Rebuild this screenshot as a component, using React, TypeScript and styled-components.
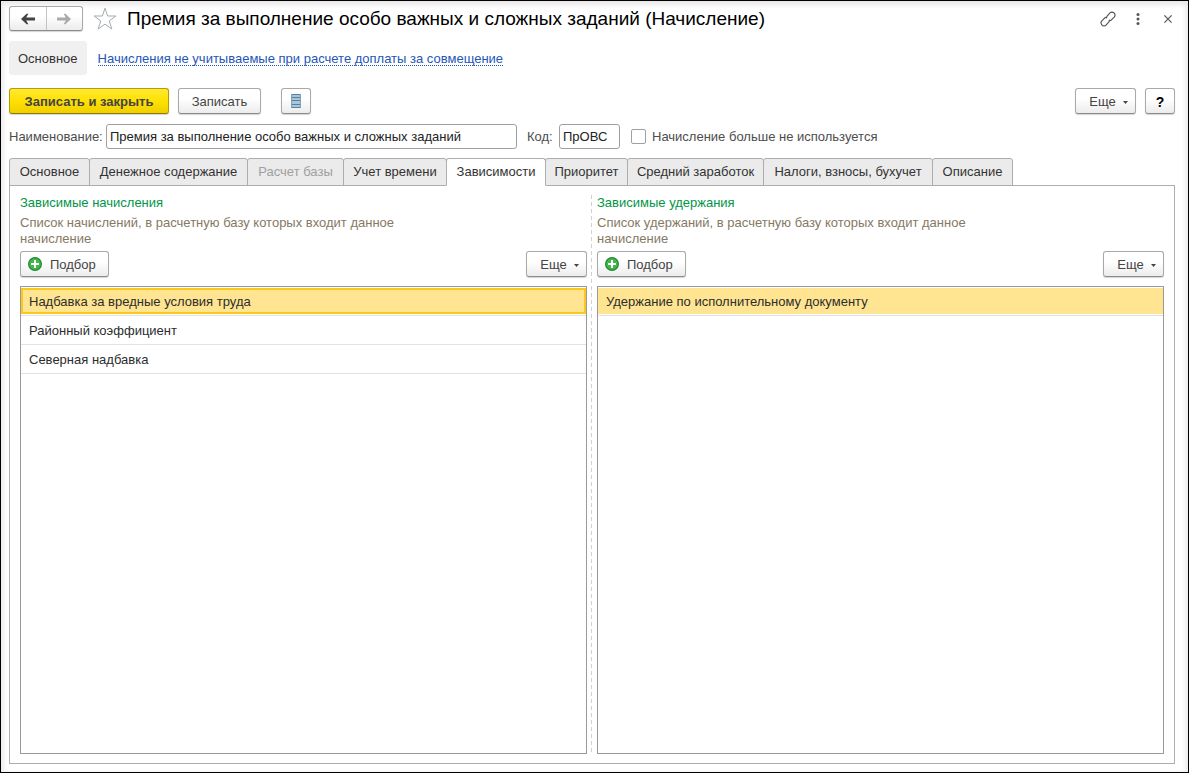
import React from "react";
import styled, { createGlobalStyle, css } from "styled-components";

const GlobalStyle = createGlobalStyle`
  *, *::before, *::after { box-sizing: border-box; }
  body {
    margin: 0;
    background: #fff;
    color: #333;
    font: 13px/16px "Liberation Sans", Arial, sans-serif;
  }
  button, input { font: inherit; color: inherit; }
  h1, h2, p, ul { margin: 0; padding: 0; }
`;

const Window = styled.main`
  display: flex;
  flex-direction: column;
  min-height: 100vh;
  padding: 5px 13px 8px 8px;
  border: 1px solid #000;
  box-shadow: inset 0 5px 4px -1px #ebe8ea, inset 4px 0 4px -1px #f0eef0, inset -4px 0 4px -1px #f0eef0;
`;

const TitleBar = styled.header`
  display: flex;
  align-items: center;
  height: 25px;
`;

const raised = css`
  border: 1px solid #a9a9a9;
  border-bottom-color: #8c8c8c;
  border-radius: 3px;
  background: linear-gradient(#fff 40%, #ececec);
  box-shadow: 0 1px 1px #d4d4d4;
`;

const HistoryButtons = styled.div`
  ${raised}
  display: flex;
  width: 74px;
  height: 25px;
`;

const HistoryButton = styled.button`
  display: flex;
  flex: 1;
  align-items: center;
  justify-content: center;
  padding: 0;
  border: 0;
  background: none;
  color: #444;
  & + & { border-left: 1px solid #c4c4c4; }
  &:disabled { color: #aaa; }
`;

const IconButton = styled.button`
  display: flex;
  align-items: center;
  justify-content: center;
  width: 30px;
  height: 24px;
  padding: 0;
  border: 0;
  background: none;
  color: #555;
`;

const FavoriteButton = styled(IconButton)`
  width: 24px;
  margin: 0 10px;
`;

const WindowActions = styled.div`
  display: flex;
  margin-right: -8px;
`;

const Title = styled.h1`
  flex: 1;
  color: #000;
  font-size: 19px;
  font-weight: 400;
  line-height: 24px;
`;

const SectionNav = styled.nav`
  display: flex;
  align-items: center;
  gap: 11px;
  margin-top: 10px;
`;

const CurrentSection = styled.span`
  padding: 10px 9px 8px;
  border-radius: 3px;
  background: #f0f0f0;
`;

const SectionLink = styled.a`
  padding-top: 3px;
  border-bottom: 1px dotted #2456b8;
  color: #2456b8;
  line-height: 12px;
  text-decoration: none;
`;

const Toolbar = styled.div`
  display: flex;
  align-items: center;
  margin-top: 13px;
`;

const Spacer = styled.span`
  flex: 1;
`;

const Button = styled.button<{ $width: number; $primary?: boolean }>`
  ${raised}
  display: flex;
  align-items: center;
  justify-content: center;
  gap: 8px;
  width: ${(p) => p.$width}px;
  height: 26px;
  padding: 2px 0 0;
  color: #444;
  ${(p) =>
    p.$primary &&
    css`
      border-color: #b39b00;
      border-bottom-color: #8f7c00;
      background: linear-gradient(#ffe934, #ffe100 50%, #efcf00);
      font-weight: 700;
    `}
`;

const PickButton = styled(Button)`
  justify-content: flex-start;
  padding-left: 7px;
  & > svg { margin: -2px 0 0; }
`;

const Group = styled.div<{ $gap: number }>`
  display: flex;
  align-items: center;
  gap: ${(p) => p.$gap}px;
`;

const ListButton = styled(Button)`
  margin-left: 20px;
  padding-top: 0;
`;

const HelpButton = styled(Button)`
  color: #000;
  font-size: 14px;
  font-weight: 700;
`;

const Fields = styled.div`
  display: flex;
  align-items: center;
  margin-top: 10px;
  color: #4d4d4d;
`;

const Field = styled.label<{ $width: number }>`
  display: flex;
  align-items: center;
  justify-content: space-between;
  width: ${(p) => p.$width}px;
  margin-right: 10px;
`;

const TextInput = styled.input<{ $width: number }>`
  width: ${(p) => p.$width}px;
  height: 25px;
  padding: 0 3px;
  border: 1px solid #a0a0a0;
  border-radius: 3px;
  background: #fff;
  color: #222;
`;

const CheckField = styled.label`
  display: flex;
  align-items: center;
  gap: 6px;
`;

const Checkbox = styled.input`
  appearance: none;
  width: 15px;
  height: 15px;
  margin: 0 0 0 1px;
  border: 1px solid #a0a0a0;
  border-radius: 2px;
  background: #fff;
  &:checked { background: #ffe100; }
`;

const Tabs = styled.div`
  display: flex;
  margin-top: 9px;
`;

const Tab = styled.button<{ $width: number }>`
  width: ${(p) => p.$width}px;
  height: 28px;
  margin: 0 -1px -1px 0;
  padding: 0;
  border: 1px solid #adadad;
  border-radius: 3px 3px 0 0;
  background: #ebebeb;
  color: #333;
  white-space: nowrap;
  &:disabled { color: #a0a0a0; }
  &[aria-selected="true"] {
    border-bottom-color: #fff;
    background: #fff;
    z-index: 1;
  }
`;

const Panel = styled.section`
  display: grid;
  flex: 1;
  grid-template-columns: minmax(0, 1fr) 10px minmax(0, 1fr);
  padding: 9px 10px;
  border: 1px solid #adadad;
`;

const Divider = styled.div`
  width: 5px;
  background: repeating-linear-gradient(#d0d0d0 0 4px, transparent 4px 7px) right / 1px 100% no-repeat;
`;

const Column = styled.div`
  display: flex;
  flex-direction: column;
`;

const Heading = styled.h2`
  color: #009646;
  font-size: 13px;
  font-weight: 400;
  line-height: 16px;
`;

const Hint = styled.p`
  max-width: 400px;
  margin-top: 4px;
  color: #857963;
`;

const ListBar = styled.div`
  display: flex;
  justify-content: space-between;
  margin-top: 4px;
`;

const List = styled.ul`
  flex: 1;
  margin-top: 9px;
  border: 1px solid #999;
  list-style: none;
`;

const Row = styled.li<{ $state?: "focused" | "selected" }>`
  height: 29px;
  padding: 1px 0;
  border-bottom: 1px solid #e2e2e2;
  color: #2d2d2d;
  & > span {
    display: block;
    height: 26px;
    padding: 4px 6px 2px;
    border: 2px solid transparent;
    ${(p) => p.$state && "background: #ffe591; border-color: #ffe591;"}
    ${(p) => p.$state === "focused" && "border-color: #fdc81e;"}
  }
`;

const Arrow = ({ back }: { back?: boolean }) => (
  <svg width="16" height="12" viewBox="0 0 16 12" fill="currentColor" aria-hidden="true">
    {back ? (
      <path d="M1 6 6.6 .8H8.4L6.2 4.6H15V7.4H6.2L8.4 11.2H6.6Z" />
    ) : (
      <path d="M15 6 9.4 .8H7.6L9.8 4.6H1V7.4H9.8L7.6 11.2H9.4Z" />
    )}
  </svg>
);

const Star = () => (
  <svg width="24" height="24" viewBox="0 0 24 24" fill="#fff" stroke="#a5abb0" aria-hidden="true">
    <path d="M12 1.2 14.6 9H22.9L16.3 13.9 18.8 22 12 17.1 5.2 22 7.7 13.9 1.1 9H9.4Z" />
  </svg>
);

const LinkIcon = () => (
  <svg width="16" height="16" viewBox="0 0 16 16" fill="none" stroke="currentColor" strokeWidth="1.2" strokeLinecap="round" aria-hidden="true">
    <path d="M6.6 6.8a2.6 2.6 0 0 1 .7-2L10 1.9a2.7 2.7 0 0 1 3.9 0l.3.3a2.7 2.7 0 0 1 0 3.9L11.4 8.9a2.6 2.6 0 0 1-1.7.8M9.4 9.2a2.6 2.6 0 0 1-.7 2L6 14.1a2.7 2.7 0 0 1-3.9 0l-.3-.3a2.7 2.7 0 0 1 0-3.9L4.6 7.1a2.6 2.6 0 0 1 1.2-.7" />
  </svg>
);

const Dots = () => (
  <svg width="4" height="12" viewBox="0 0 4 12" fill="currentColor" aria-hidden="true">
    <circle cx="2" cy="1.6" r="1.5" /><circle cx="2" cy="6" r="1.5" /><circle cx="2" cy="10.4" r="1.5" />
  </svg>
);

const Cross = () => (
  <svg width="8" height="8" viewBox="0 0 8 8" stroke="currentColor" strokeWidth="1.2" aria-hidden="true">
    <path d="m.4.4 7.2 7.2M7.6.4.4 7.6" />
  </svg>
);

const ListIcon = () => (
  <svg width="10" height="14" viewBox="0 0 10 14" aria-hidden="true">
    <path fill="#a9c6da" d="M0 0h10v14H0z" />
    <path stroke="#56809e" d="M0 .5h10M0 3.5h10M0 6.5h10M0 10.5h10M0 13.5h10" />
    <path stroke="#7fa3bc" d="M.5 0v14M9.5 0v14" />
  </svg>
);

const Plus = () => (
  <svg width="14" height="14" viewBox="0 0 14 14" aria-hidden="true">
    <circle cx="7" cy="7" r="6.4" fill="#43b649" stroke="#248a35" strokeWidth="1.2" />
    <path stroke="#fff" strokeWidth="2" d="M7 3v8M3 7h8" />
  </svg>
);

const Caret = () => (
  <svg width="5" height="3" viewBox="0 0 5 3" fill="#444" aria-hidden="true">
    <path d="M0 0h5L2.5 3Z" />
  </svg>
);

const MoreLabel = styled.span`
  display: flex;
  align-items: center;
  gap: 7px;
  padding-left: 6px;
`;

const MoreButton = () => (
  <Button type="button" $width={61}>
    <MoreLabel>Еще <Caret /></MoreLabel>
  </Button>
);

const tabs: { label: string; width: number; disabled?: boolean }[] = [
  { label: "Основное", width: 81 },
  { label: "Денежное содержание", width: 159 },
  { label: "Расчет базы", width: 97, disabled: true },
  { label: "Учет времени", width: 104 },
  { label: "Зависимости", width: 100 },
  { label: "Приоритет", width: 83 },
  { label: "Средний заработок", width: 137 },
  { label: "Налоги, взносы, бухучет", width: 170 },
  { label: "Описание", width: 81 },
];

type DependencyProps = {
  title: string;
  hint: string;
  items: string[];
  state: "focused" | "selected";
};

const Dependency = ({ title, hint, items, state }: DependencyProps) => (
  <Column>
    <Heading>{title}</Heading>
    <Hint>{hint}</Hint>
    <ListBar>
      <PickButton type="button" $width={89}><Plus />Подбор</PickButton>
      <MoreButton />
    </ListBar>
    <List>
      {items.map((item, i) => (
        <Row key={item} $state={i === 0 ? state : undefined}><span>{item}</span></Row>
      ))}
    </List>
  </Column>
);

export default function App() {
  return (
    <>
      <GlobalStyle />
      <Window>
        <TitleBar>
          <HistoryButtons>
            <HistoryButton type="button" aria-label="Назад"><Arrow back /></HistoryButton>
            <HistoryButton type="button" aria-label="Вперед" disabled><Arrow /></HistoryButton>
          </HistoryButtons>
          <FavoriteButton type="button" aria-label="Избранное"><Star /></FavoriteButton>
          <Title>Премия за выполнение особо важных и сложных заданий (Начисление)</Title>
          <WindowActions>
            <IconButton type="button" aria-label="Ссылка"><LinkIcon /></IconButton>
            <IconButton type="button" aria-label="Меню"><Dots /></IconButton>
            <IconButton type="button" aria-label="Закрыть"><Cross /></IconButton>
          </WindowActions>
        </TitleBar>
        <SectionNav>
          <CurrentSection>Основное</CurrentSection>
          <SectionLink href="#">Начисления не учитываемые при расчете доплаты за совмещение</SectionLink>
        </SectionNav>
        <Toolbar>
          <Group $gap={9}>
            <Button type="button" $width={160} $primary>Записать и закрыть</Button>
            <Button type="button" $width={83}>Записать</Button>
          </Group>
          <ListButton type="button" $width={30} aria-label="Список"><ListIcon /></ListButton>
          <Spacer />
          <Group $gap={9}>
            <MoreButton />
            <HelpButton type="button" $width={30}>?</HelpButton>
          </Group>
        </Toolbar>
        <Fields>
          <Field $width={508}>
            Наименование:
            <TextInput $width={411} defaultValue="Премия за выполнение особо важных и сложных заданий" />
          </Field>
          <Field $width={93}>
            Код:
            <TextInput $width={61} defaultValue="ПрОВС" />
          </Field>
          <CheckField><Checkbox type="checkbox" />Начисление больше не используется</CheckField>
        </Fields>
        <Tabs role="tablist">
          {tabs.map((t) => (
            <Tab key={t.label} type="button" role="tab" $width={t.width} disabled={t.disabled} aria-selected={t.label === "Зависимости"}>
              {t.label}
            </Tab>
          ))}
        </Tabs>
        <Panel role="tabpanel">
          <Dependency
            title="Зависимые начисления"
            hint="Список начислений, в расчетную базу которых входит данное начисление"
            items={["Надбавка за вредные условия труда", "Районный коэффициент", "Северная надбавка"]}
            state="focused"
          />
          <Divider />
          <Dependency
            title="Зависимые удержания"
            hint="Список удержаний, в расчетную базу которых входит данное начисление"
            items={["Удержание по исполнительному документу"]}
            state="selected"
          />
        </Panel>
      </Window>
    </>
  );
}
